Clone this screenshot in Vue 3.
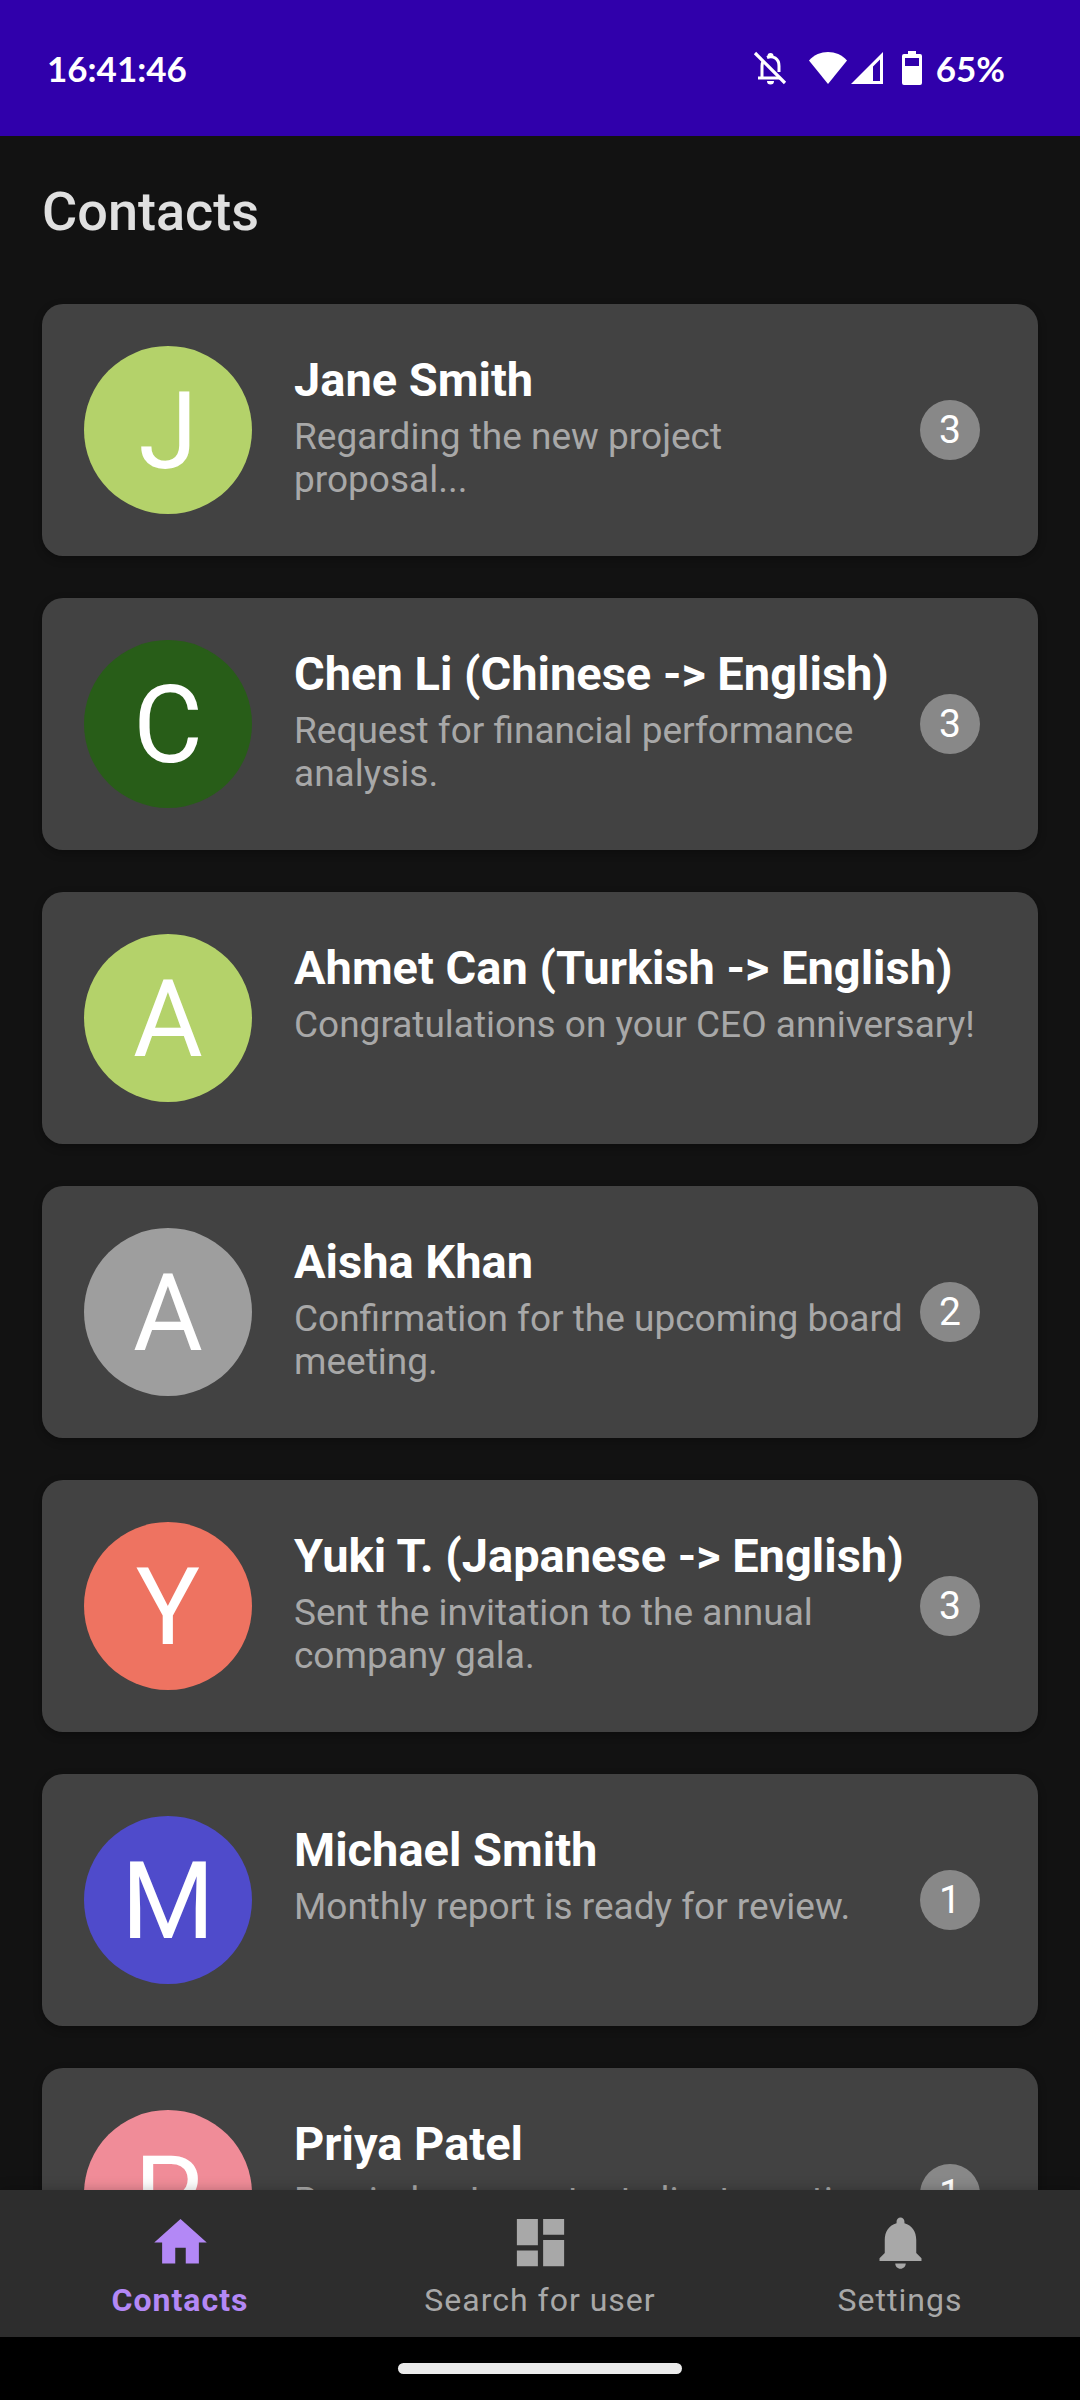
<script setup>
const contacts = [
  { name: 'Jane Smith', message: 'Regarding the new project proposal...', color: '#b4d26a', unread: 3 },
  { name: 'Chen Li (Chinese -> English)', message: 'Request for financial performance analysis.', color: '#285d18', unread: 3 },
  { name: 'Ahmet Can (Turkish -> English)', message: 'Congratulations on your CEO anniversary!', color: '#b4d26a', unread: 0 },
  { name: 'Aisha Khan', message: 'Confirmation for the upcoming board meeting.', color: '#9e9e9e', unread: 2 },
  { name: 'Yuki T. (Japanese -> English)', message: 'Sent the invitation to the annual company gala.', color: '#ee7361', unread: 3 },
  { name: 'Michael Smith', message: 'Monthly report is ready for review.', color: '#4f4bcb', unread: 1 },
  { name: 'Priya Patel', message: 'Reminder: Important client meeting.', color: '#f08c98', unread: 1 },
]

const tabs = [
  { label: 'Contacts', active: true, icon: 'M10 20v-6h4v6h5v-8h3L12 3 2 12h3v8z' },
  { label: 'Search for user', active: false, icon: 'M3 13h8V3H3v10zm0 8h8v-6H3v6zm10 0h8V11h-8v10zm0-18v6h8V3h-8z' },
  { label: 'Settings', active: false, icon: 'M12 22c1.1 0 2-.9 2-2h-4c0 1.1.89 2 2 2zm6-6v-5c0-3.07-1.64-5.64-4.5-6.32V4c0-.83-.67-1.5-1.5-1.5s-1.5.67-1.5 1.5v.68C7.63 5.36 6 7.92 6 11v5l-2 2v1h16v-1l-2-2z' },
]
</script>

<template>
  <div class="screen">
    <div class="status">
      <span>16:41:46</span>
      <div class="status-right">
        <svg class="mute" width="34" height="36" viewBox="0 0 34 36" fill="none" stroke="#fff" stroke-width="3" role="img" aria-label="Notifications muted">
          <path d="M5 28h22M9 28V16c0-2 .5-4 1.500-5.500M14 7.500c6-2.500 12 1 12 8.500v6" />
          <path d="M2 3l30 30" stroke-width="3.200" />
          <path d="M14.500 6a3 3 0 0 1 6 0zM14 31h7a3.500 3.500 0 0 1-7 0z" fill="#fff" stroke="none" />
        </svg>
        <svg class="wifi" width="40" height="34" viewBox="0 0 40 34" fill="#fff" role="img" aria-label="Wi-Fi">
          <path d="M1 9.500C11-1.800 29-1.800 39 9.500L20 33z" />
        </svg>
        <svg class="signal" width="34" height="34" viewBox="0 0 34 34" fill="#fff" role="img" aria-label="Mobile signal">
          <path fill-rule="evenodd" d="M33 1v32H1zM30 8.500L23 15.500V30h7z" />
        </svg>
        <svg class="battery" width="20" height="34" viewBox="0 0 20 34" fill="#fff" role="img" aria-label="Battery">
          <path fill-rule="evenodd" d="M6 0h8v3h4a2 2 0 0 1 2 2v27a2 2 0 0 1-2 2H2a2 2 0 0 1-2-2V5a2 2 0 0 1 2-2h4zM3 7v8h14V7z" />
        </svg>
        <span>65%</span>
      </div>
    </div>

    <header class="toolbar">
      <h1>Contacts</h1>
    </header>

    <main class="list">
      <article v-for="c in contacts" :key="c.name" class="card">
        <div class="avatar" :style="{ backgroundColor: c.color }">{{ c.name[0] }}</div>
        <div class="body">
          <h2>{{ c.name }}</h2>
          <p>{{ c.message }}</p>
        </div>
        <span v-if="c.unread" class="badge">{{ c.unread }}</span>
      </article>
    </main>

    <nav class="tabs">
      <button v-for="t in tabs" :key="t.label" type="button" class="tab" :class="{ active: t.active }">
        <svg width="63" height="63" viewBox="0 0 24 24" fill="currentColor" aria-hidden="true"><path :d="t.icon" /></svg>
        <span>{{ t.label }}</span>
      </button>
    </nav>

    <div class="gesture"><div class="pill"></div></div>
  </div>
</template>

<style>
body {
  background: #121212;
}
</style>

<style scoped>
.screen {
  display: flex;
  flex-direction: column;
  height: 100vh;
  background: #121212;
  font-family: Roboto, "Liberation Sans", sans-serif;
}
.status {
  flex: none;
  display: flex;
  align-items: center;
  justify-content: space-between;
  box-sizing: border-box;
  height: 136px;
  padding: 0 75px 0 47px;
  background: #3000ab;
  color: #fff;
  font-family: Lato, Roboto, sans-serif;
  font-size: 35px;
  font-weight: 700;
}
.status-right {
  display: flex;
  align-items: center;
}
.mute {
  margin-right: 21px;
}
.wifi {
  margin-right: 2px;
}
.signal {
  margin-right: 18px;
}
.battery {
  margin-right: 14px;
}
.toolbar {
  flex: none;
  display: flex;
  align-items: center;
  height: 147px;
  padding: 4px 42px 0;
  box-sizing: border-box;
}
h1 {
  margin: 0;
  color: #e0e0e0;
  font-size: 54px;
  font-weight: 500;
}
.list {
  flex: 1;
  min-height: 0;
  overflow: hidden;
  padding: 21px 42px;
  display: flex;
  flex-direction: column;
  gap: 42px;
}
.card {
  flex: none;
  display: flex;
  align-items: center;
  box-sizing: border-box;
  min-height: 252px;
  padding: 42px 58px 42px 42px;
  border-radius: 21px;
  background: #424242;
  box-shadow: 0 3px 8px rgba(0, 0, 0, 0.3);
}
.avatar {
  flex: none;
  display: flex;
  align-items: center;
  justify-content: center;
  box-sizing: border-box;
  width: 168px;
  height: 168px;
  margin-right: 42px;
  padding-top: 3px;
  border-radius: 50%;
  color: #fff;
  font-size: 107px;
}
.body {
  flex: 1;
  min-width: 0;
  align-self: stretch;
  padding-top: 6px;
}
h2 {
  margin: 0 0 8px;
  color: #fff;
  font-size: 47px;
  line-height: 55px;
  font-weight: 700;
}
p {
  margin: 0;
  color: #a8a8a8;
  font-size: 37px;
  line-height: 43px;
}
.badge {
  flex: none;
  width: 60px;
  height: 60px;
  margin-left: 16px;
  border-radius: 50%;
  background: #888;
  color: #fff;
  font-size: 39px;
  line-height: 60px;
  text-align: center;
}
.tabs {
  flex: none;
  display: flex;
  height: 147px;
  background: #2d2d2d;
  box-shadow: 0 0 12px rgba(0, 0, 0, 0.25);
  z-index: 1;
}
.tab {
  flex: 1;
  display: flex;
  flex-direction: column;
  align-items: center;
  gap: 7px;
  padding: 21px 0 0;
  border: 0;
  background: none;
  color: #a8a8a8;
  font: 400 32px/38px Roboto, "Liberation Sans", sans-serif;
  letter-spacing: 1px;
}
.tab.active {
  color: #b388f6;
  font-weight: 700;
}
.gesture {
  flex: none;
  display: flex;
  align-items: center;
  justify-content: center;
  height: 63px;
  background: #000;
}
.pill {
  width: 284px;
  height: 11px;
  border-radius: 6px;
  background: #ebebeb;
}
</style>
